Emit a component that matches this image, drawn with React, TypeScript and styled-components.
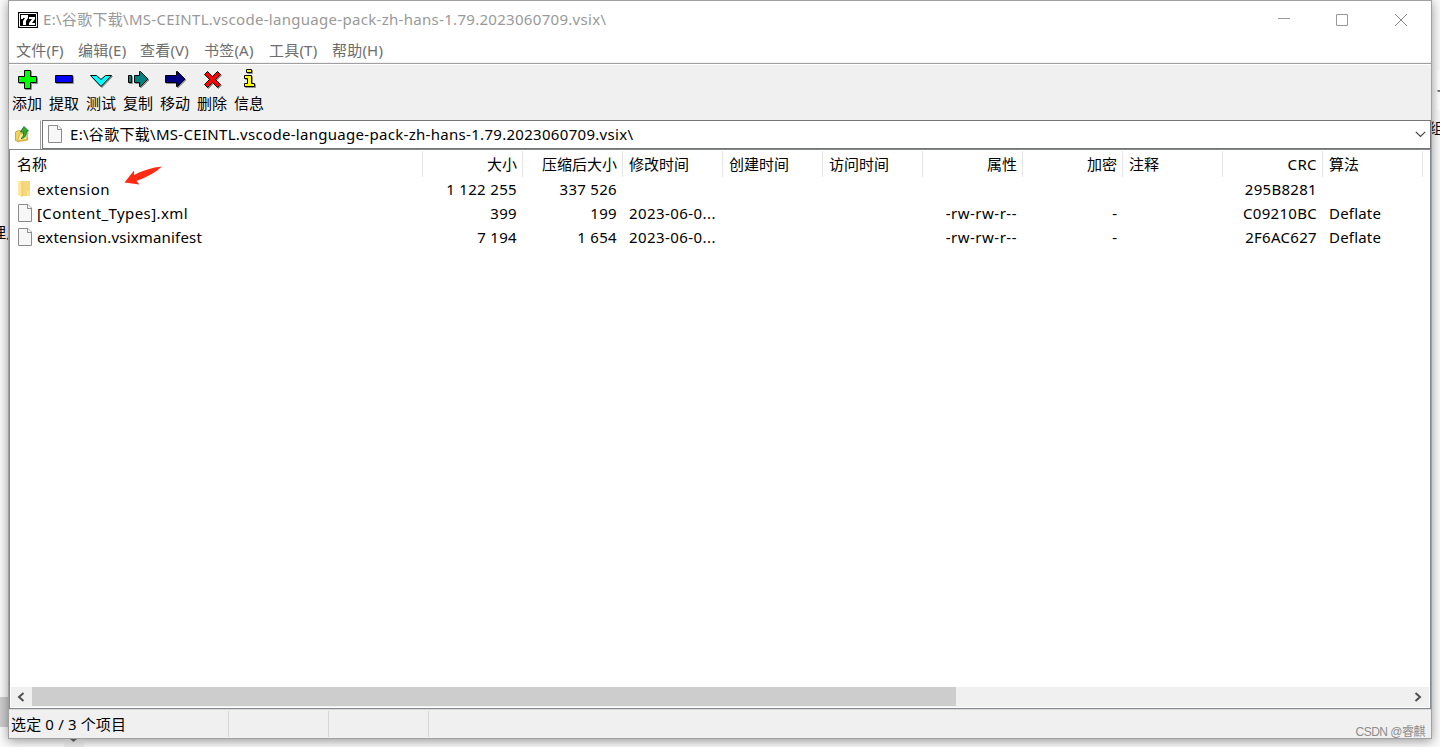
import React from 'react';
import styled, { createGlobalStyle } from 'styled-components';

const Global = createGlobalStyle`
  * { box-sizing: border-box; }
  body { margin: 0; overflow: hidden; background: #fafafa; }
`;

const Desktop = styled.div`
  position: relative;
  width: 1440px;
  height: 747px;
  padding: 0 8px 8px;
  overflow: hidden;
  background: #fafafa;
  color: #000;
  font: 15px/20px 'Noto Sans', 'Noto Sans CJK SC', sans-serif;
  white-space: pre;
`;

const Window = styled.main`
  position: relative;
  width: 1424px;
  height: 739px;
  display: flex;
  flex-direction: column;
  background: #fff;
  border: 1px solid #a0a0a0;
  box-shadow: 0 2px 10px rgba(0, 0, 0, 0.4);
`;

const TitleBar = styled.header`
  height: 37px;
  flex: none;
  display: flex;
  align-items: center;
  padding-left: 9px;
  color: #999;
`;

const Text = styled.span<{ $spacing?: number }>`
  letter-spacing: ${(p) => p.$spacing ?? 0}px;
`;

const TitleText = styled(Text)`
  margin-left: 5px;
  padding-bottom: 2px;
  flex: 1;
`;

const WindowControls = styled.div`
  display: flex;
  margin-right: 1px;
`;

const ControlButton = styled.div`
  width: 58.5px;
  height: 36px;
  display: flex;
  align-items: center;
  justify-content: center;
`;

const MenuBar = styled.nav`
  height: 24px;
  flex: none;
  display: flex;
  align-items: center;
  padding-left: 7px;
  padding-bottom: 1px;
  letter-spacing: 0.2px;
  color: #6d6d6d;
`;

const MenuItem = styled.div<{ $width: number }>`
  width: ${(p) => p.$width}px;
`;

const Toolbar = styled.div`
  height: 58px;
  flex: none;
  display: flex;
  border-top: 1px solid #f0f0f0;
  background: linear-gradient(#a0a0a0 0 1px, #fff 1px 2px, #f0f0f0 2px);
`;

const ToolButton = styled.div`
  width: 37px;
  display: flex;
  flex-direction: column;
  align-items: center;
  line-height: 20px;
`;

const ToolLabel = styled.div`
  width: 36px;
  padding-left: 3px;
  align-self: flex-start;
`;

const ToolIcon = styled.svg`
  width: 37px;
  height: 24px;
  margin-top: 6px;
  flex: none;
`;

const AddressRow = styled.div`
  height: 29px;
  flex: none;
  display: flex;
`;

const UpButton = styled.div`
  width: 32px;
  border-top: 1px solid #fff;
  border-right: 1px solid #a0a0a0;
  padding: 3px 0 0 5px;
`;

const AddressBox = styled.div`
  flex: 1;
  margin-left: 1px;
  display: flex;
  align-items: center;
  border: 1px solid #767676;
  padding: 0 4px 1px;
`;

const AddressText = styled(Text)`
  flex: 1;
  margin-left: 7px;
  padding-bottom: 1px;
`;

const FileList = styled.section`
  height: 560px;
  flex: none;
  display: flex;
  flex-direction: column;
  border: 1px solid #828790;
`;

const HeaderRow = styled.div`
  display: flex;
  height: 27px;
  margin-left: -1px;
  flex: none;
`;

const HeaderCell = styled.div<{ $width: number; $right?: boolean }>`
  width: ${(p) => p.$width}px;
  height: 26px;
  margin-top: 1px;
  border-right: 1px solid #e5e5e5;
  padding: 3px 5px 0 6px;
  text-align: ${(p) => (p.$right ? 'right' : 'left')};

  &:first-child {
    padding-left: 8px;
  }
`;

const Row = styled.div`
  display: flex;
  height: 24px;
  margin-left: -1px;
`;

const Cell = styled.div<{ $width: number; $right?: boolean }>`
  width: ${(p) => p.$width}px;
  height: 24px;
  display: flex;
  align-items: center;
  justify-content: ${(p) => (p.$right ? 'flex-end' : 'flex-start')};
  padding: 0 6px;

  &:first-child {
    padding-left: 8px;
  }
`;

const FileName = styled(Text)`
  margin-left: 4px;
`;

const ScrollBar = styled.div`
  height: 20px;
  margin: auto 1px 1px;
  display: flex;
  background: #f0f0f0;
`;

const ScrollArrow = styled.div`
  width: 21px;
  display: flex;
  align-items: center;
  justify-content: center;
  padding: 0 2px 1px 0;
`;

const ScrollTrack = styled.div`
  flex: 1;
`;

const ScrollThumb = styled.div`
  width: 924px;
  height: 19px;
  background: #cdcdcd;
`;

const StatusBar = styled.footer`
  flex: 1;
  display: flex;
  background: #f0f0f0;
  border-top: 1px solid #d9d9d9;
  padding-top: 1px;
`;

const StatusCell = styled.div<{ $width: number }>`
  width: ${(p) => p.$width}px;
  height: 26px;
  border-right: 1px solid #d7d7d7;
  padding: 3px 2px 0;
  letter-spacing: 0.15px;
`;

const Scrap = styled.div<{ $x: number; $y: number; $w: number; $h: number; $fill?: string }>`
  position: absolute;
  left: ${(p) => p.$x}px;
  top: ${(p) => p.$y}px;
  width: ${(p) => p.$w}px;
  height: ${(p) => p.$h}px;
  overflow: hidden;
  background: ${(p) => p.$fill ?? 'transparent'};

  svg {
    display: block;
  }
`;

const ScrapText = styled.div<{ $shift: number }>`
  margin-left: ${(p) => p.$shift}px;
`;

const Pointer = styled.svg`
  position: absolute;
  left: 115px;
  top: 164px;
`;

const Watermark = styled.div`
  position: absolute;
  right: 15px;
  bottom: 6px;
  font: 12px/18px 'Liberation Sans', 'Noto Sans CJK SC', sans-serif;
  letter-spacing: -0.5px;
  color: #8c8c8c;
`;

const PageIcon = () => (
  <svg width="16" height="20" viewBox="0 0 16 20">
    <path d="M1.5 1.5h9.500l3.500 3.500v13.500h-13z" fill="#f7f7f7" stroke="#8c8c8c" />
    <path d="M10.500 1.500v4h4" fill="#fff" stroke="#8c8c8c" />
  </svg>
);

const FolderIcon = () => (
  <svg width="16" height="20" viewBox="0 0 16 20">
    <path d="M3 2h10v15H3z" fill="#f7d77c" />
    <path d="M1 2l4 1.500V18l-4-2z" fill="#ffe7a2" />
    <path d="M5 3.500V18" stroke="#efc65b" />
    <path d="M10 12h3v5h-3z" fill="#ffe092" />
  </svg>
);

const LogoIcon = () => (
  <svg width="20" height="16" viewBox="0 0 20 16">
    <path d="M0 0h20v16H0z" />
    <path d="M1.500 1.500h17v13h-17z" fill="none" stroke="#fff" />
    <path d="M3 3h7v3L8 9v4H5V9l2-3H5v1H3zM11 5h6v2l-3 4h3v2h-6v-2l3-4h-3z" fill="#fff" />
  </svg>
);

const UpIcon = () => (
  <svg width="17" height="19" viewBox="0 0 17 19">
    <path d="M1.500 8l3-1.500L7 7l5-1 1.500 1v9l-9 1.500-3-1z" fill="#eed65e" stroke="#cfa93a" />
    <path d="M3.500 16.500L6 10l8-1.500-1.500 7z" fill="#fff0a0" stroke="#d8b548" />
    <path d="M7 14.500c2.500-1 2.800-3.500 2.300-6.500H6.500L10 2.500 14.500 7H12.300c.4 4.500-1.100 7-5.300 7.500z" fill="#35aa38" stroke="#16751b" strokeWidth=".9" />
  </svg>
);

const shapes: Record<string, { d: string; fill: string }> = {
  添加: { d: 'M15.500 1.500h6v6h6v6h-6v6h-6v-6h-6v-6h6z', fill: '#0f0' },
  提取: { d: 'M9.500 6.500h17v7h-17z', fill: '#00f' },
  测试: { d: 'M7.500 6.500h6l4.500 4 4.500-4h6l-10.500 11z', fill: '#0ff' },
  复制: { d: 'M8.500 6.500h3v7h-3zM14.500 6.500h5v-4l1 0 7.500 7.500-7.500 7.500h-1v-4h-5z', fill: '#008080' },
  移动: { d: 'M8.500 6.500h11v-4h1l7.500 7.500-7.500 7.500h-1v-4h-11z', fill: '#000080' },
  删除: { d: 'M13.500 2.500l5 5 5-5 3 3-5 5 5 5-3 3-5-5-5 5-3-3 5-5-5-5z', fill: '#f00' },
  信息: { d: 'M15.500.500h5v3h-5zM13.500 6.500h7v8h3v3h-10v-3h3v-5h-3z', fill: '#ff0' },
};

const menus: [string, number][] = [
  ['文件(F)', 62], ['编辑(E)', 62], ['查看(V)', 64], ['书签(A)', 65], ['工具(T)', 63], ['帮助(H)', 70],
];

const columns: { name: string; width: number; right?: boolean; spacing?: number }[] = [
  { name: '名称', width: 414, spacing: 0.3 },
  { name: '大小', width: 100, right: true, spacing: 0.33 },
  { name: '压缩后大小', width: 100, right: true, spacing: 0.3 },
  { name: '修改时间', width: 100, spacing: 0.43 },
  { name: '创建时间', width: 100 },
  { name: '访问时间', width: 100 },
  { name: '属性', width: 100, right: true, spacing: 0.5 },
  { name: '加密', width: 100, right: true },
  { name: '注释', width: 100 },
  { name: 'CRC', width: 100, right: true, spacing: 0.3 },
  { name: '算法', width: 100, spacing: 0.2 },
];

const files: string[][] = [
  ['extension', '1 122 255', '337 526', '', '', '', '', '', '', '295B8281', ''],
  ['[Content_Types].xml', '399', '199', '2023-06-0...', '', '', '-rw-rw-r--', '-', '', 'C09210BC', 'Deflate'],
  ['extension.vsixmanifest', '7 194', '1 654', '2023-06-0...', '', '', '-rw-rw-r--', '-', '', '2F6AC627', 'Deflate'],
];

const nameSpacing = [0.48, 0.4, 0.18];

const path = 'E:\\谷歌下载\\MS-CEINTL.vscode-language-pack-zh-hans-1.79.2023060709.vsix\\';

export default function App() {
  return (
    <>
      <Global />
      <Desktop>
        <Scrap $x={0} $y={697} $w={8} $h={30} $fill="#cdcdcd" />
        <Scrap $x={0} $y={222} $w={8} $h={20}><ScrapText $shift={-9}>理点</ScrapText></Scrap>
        <Scrap $x={1431} $y={118} $w={9} $h={20}><ScrapText $shift={-2}>组</ScrapText></Scrap>
        <Scrap $x={1437} $y={70} $w={3} $h={40} $fill="#fff">
          <svg width="3" height="40"><path d="M0 20h3v2H1z" fill="#777" /></svg>
        </Scrap>
        <Window>
          <TitleBar>
            <LogoIcon />
            <TitleText $spacing={0.3}>{path}</TitleText>
            <WindowControls>
              <ControlButton><svg width="12" height="12"><path d="M0 4.500h12" stroke="#999" /></svg></ControlButton>
              <ControlButton><svg width="12" height="12"><path d="M.5.5h11v11H.5z" fill="none" stroke="#999" /></svg></ControlButton>
              <ControlButton><svg width="12" height="12"><path d="M0 0l12 12M12 0L0 12" stroke="#888" /></svg></ControlButton>
            </WindowControls>
          </TitleBar>
          <MenuBar>
            {menus.map(([label, width]) => (
              <MenuItem key={label} $width={width}>{label}</MenuItem>
            ))}
          </MenuBar>
          <Toolbar>
            {Object.entries(shapes).map(([label, { d, fill }]) => (
              <ToolButton key={label}>
                <ToolIcon viewBox="0 0 37 24">
                  <path d={d} transform="translate(1 1)" fill="#909090" stroke="#909090" />
                  <path d={d} fill={fill} stroke="#000" />
                </ToolIcon>
                <ToolLabel>{label}</ToolLabel>
              </ToolButton>
            ))}
          </Toolbar>
          <AddressRow>
            <UpButton><UpIcon /></UpButton>
            <AddressBox>
              <PageIcon />
              <AddressText $spacing={0.3}>{path}</AddressText>
              <svg width="11" height="7"><path d="M.8.8l4.700 4.700L10.200.8" fill="none" stroke="#444" strokeWidth="1.200" /></svg>
            </AddressBox>
          </AddressRow>
          <FileList>
            <HeaderRow>
              {columns.map((c) => (
                <HeaderCell key={c.name} $width={c.width} $right={c.right}>
                  {c.name === 'CRC' ? <Text $spacing={0.4}>{c.name}</Text> : c.name}
                </HeaderCell>
              ))}
            </HeaderRow>
            {files.map((file, r) => (
              <Row key={file[0]}>
                {columns.map((c, i) => (
                  <Cell key={c.name} $width={c.width} $right={c.right}>
                    {i === 0 && (r === 0 ? <FolderIcon /> : <PageIcon />)}
                    {i === 0
                      ? <FileName $spacing={nameSpacing[r]}>{file[i]}</FileName>
                      : <Text $spacing={c.spacing}>{file[i]}</Text>}
                  </Cell>
                ))}
              </Row>
            ))}
            <ScrollBar>
              <ScrollArrow><svg width="8" height="10"><path d="M6.500 1L2 5l4.500 4" fill="none" stroke="#505050" strokeWidth="2" /></svg></ScrollArrow>
              <ScrollTrack><ScrollThumb /></ScrollTrack>
              <ScrollArrow><svg width="8" height="10"><path d="M1.500 1L6 5 1.500 9" fill="none" stroke="#505050" strokeWidth="2" /></svg></ScrollArrow>
            </ScrollBar>
          </FileList>
          <StatusBar>
            <StatusCell $width={220}>选定 0 / 3 个项目</StatusCell>
            <StatusCell $width={100} />
            <StatusCell $width={100} />
          </StatusBar>
        </Window>
        <Scrap $x={64} $y={739} $w={20} $h={8} $fill="rgba(200, 200, 200, 0.3)">
          <svg width="20" height="8"><path d="M6 0h7L9.500 3z" fill="#555" /></svg>
        </Scrap>
        <Pointer width="50" height="24" viewBox="0 0 50 24">
          <path d="M9.500 18.500L19 6.500v4.500Q32 4 47 2.500 38 11 21.500 17l3 3.500z" fill="#ff2a13" />
        </Pointer>
        <Watermark>CSDN @睿麒</Watermark>
      </Desktop>
    </>
  );
}
